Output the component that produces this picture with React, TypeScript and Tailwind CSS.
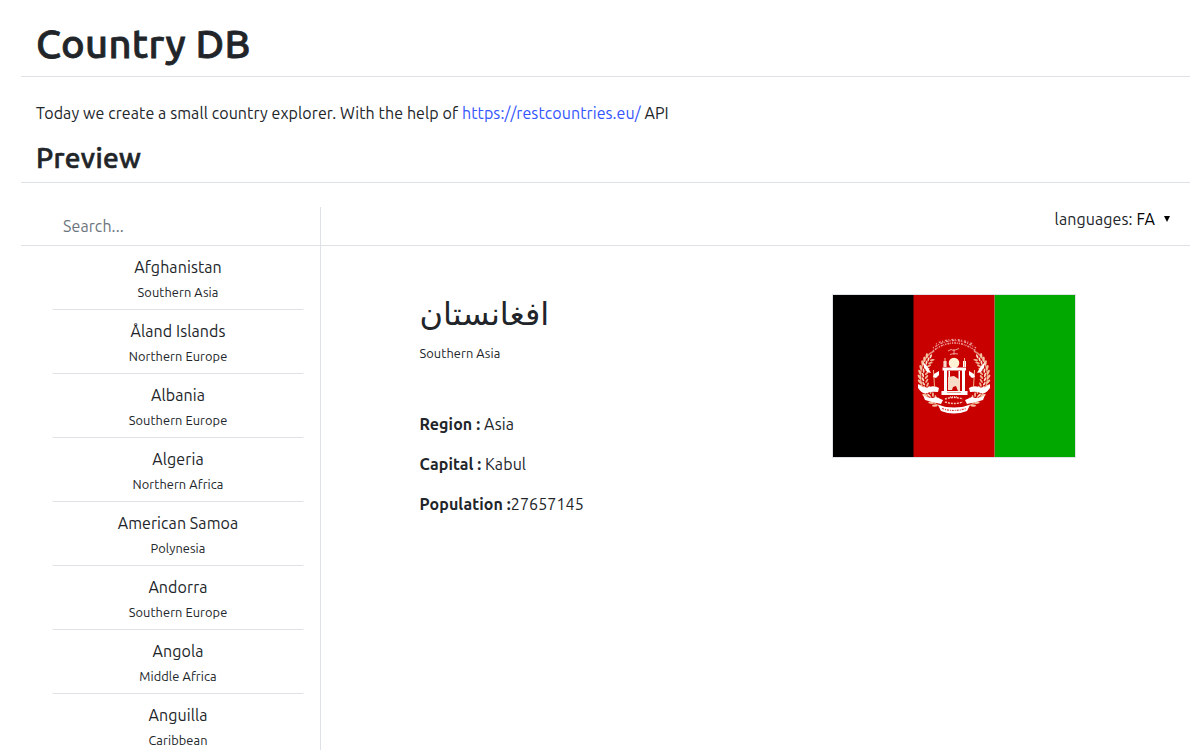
const countries: [string, string][] = [
  ['Afghanistan', 'Southern Asia'],
  ['Åland Islands', 'Northern Europe'],
  ['Albania', 'Southern Europe'],
  ['Algeria', 'Northern Africa'],
  ['American Samoa', 'Polynesia'],
  ['Andorra', 'Southern Europe'],
  ['Angola', 'Middle Africa'],
  ['Anguilla', 'Caribbean'],
];

function Leaves({ flip = false }: { flip?: boolean }) {
  const angles = [-38, -31, -24, -16, -8, 0, 8, 16, 24, 32, 40, 48, 56];
  return (
    <g transform={flip ? 'matrix(-1 0 0 1 242 0)' : undefined}>
      <path d="M101 56C88 62 84 82 91 96C95 105 102 110 110 112" fill="none" stroke="#e58f78" strokeWidth="1.500" />
      {angles.map((a) => (
        <g key={a} transform={`rotate(${-a} 121 82)`}>
          <ellipse cx="86.500" cy="82" rx="2.700" ry="1.200" transform="rotate(55 86.500 82)" fill="#f3c4a2" />
          <ellipse cx="90" cy="80" rx="2.200" ry="0.900" transform="rotate(75 90 80)" fill="#fae3cb" />
          <ellipse cx="93.500" cy="82" rx="2.400" ry="1" transform="rotate(-50 93.500 82)" fill="#f0b093" />
        </g>
      ))}
      <path d="M85 89Q90 94 96 92T106 93L105 97Q98 96 94 98T85 93Z" fill="#fff" />
      <path d="M90 67L94 71L98 78L94 77L91 72Z" fill="#fff" />
      <path d="M90 100Q97 105 103 102L110 105L108 109Q99 107 92 105Z" fill="#fff" />
    </g>
  );
}

function Flag() {
  return (
    <svg viewBox="0 0 242 162" className="block h-[162px] w-[242px]" role="img" aria-label="Flag">
      <path d="M0 0H81V162H0Z" fill="#000" />
      <path d="M161.500 0H242V162H161.500Z" fill="#00a800" />
      <path d="M80.500 0H161.500V162H80.500Z" fill="#c80000" />
      <Leaves />
      <Leaves flip />
      <g fill="none" stroke="#ee9a98" strokeWidth="1">
        <path d="M100 56Q121 40 143 56" strokeWidth="1.600" strokeDasharray="1.200 1.100 2 .8 .8 1" />
        <path d="M100 53Q121 38 143 53" strokeWidth="1.300" strokeDasharray="1 1.500 2.500 1" />
        <path d="M103 49Q121 40 140 49" strokeWidth="1.300" strokeDasharray="1 2 2 1.500" />
        <path d="M115 56l3-1.500 3 1 5-2M117 59.500l4-1 4 .5M121 54v6" />
      </g>
      <g fill="#fff">
        <circle cx="121" cy="68" r="5.300" fill="#fff3d6" />
        <path d="M109.500 72.500h23.500v3h-23.500zM111 75h3v22h-3zM115.500 76h1.500v19h-1.500zM125.500 76h1.500v19h-1.500zM129 75h3v22h-3zM108.500 96h26v4h-26z" />
        <path d="M110.500 66h3v6h-3zM130 66h3v6h-3z" />
        <path d="M115 82l6-1 6 4v11h-2l-2-5-3 1-1 3h-4z" fill="#f8dcc8" />
      </g>
      <path d="M112 63v9M131.500 63v9M100.500 75l1 17M141.500 75l-1 17" stroke="#f2b792" strokeWidth="1" />
      <path d="M101 79l5-3v4l-3 3-3-1zM141 79l-5-3v4l3 3 3-1z" fill="#fff" />
      <path d="M114 97.500h14" stroke="#d57a67" strokeWidth="0.700" />
      <path d="M112 104q9-3 18 0M112 107q9 3 18 0" fill="none" stroke="#f5bdb0" strokeWidth="1.500" strokeDasharray="2 1" />
      <path d="M117 102h8" stroke="#fff" strokeWidth="1.200" strokeDasharray="1 1" />
      <path d="M105 110Q121 115 137 110L134 116Q121 121 108 116Z" fill="#fff" />
      <path d="M109 113.500q12 4 24 0" fill="none" stroke="#d44" strokeWidth="1.200" strokeDasharray="2 1 1 1" />
    </svg>
  );
}

export default function App() {
  return (
    <div className="h-[750px] overflow-hidden bg-white pr-[10px] pl-[21px] font-['Ubuntu','Noto_Sans','DejaVu_Sans',sans-serif] text-[16px] tracking-[0.09px] text-[#212529]">
      <header className="flex h-[77px] items-center border-b border-[#dee2e6] pt-3 pl-[15px]">
        <h1 className="text-[40px] leading-[48px] font-medium tracking-[0.3px] [-webkit-text-stroke:0.8px_#212529]">Country DB</h1>
      </header>
      <p className="mt-6 h-6 pl-[15px] leading-6 whitespace-nowrap">
        Today we create a small country explorer. With the help of{' '}
        <a className="text-[#3455ff]">https://restcountries.eu/</a> API
      </p>
      <div className="mt-4 h-[42px] border-b border-[#dee2e6] pl-[15px]">
        <h2 className="text-[28px] leading-[34px] font-medium tracking-[0.35px] [-webkit-text-stroke:0.6px_#212529]">Preview</h2>
      </div>
      <main className="mt-6 flex h-[543px]">
        <aside className="w-[300px] shrink-0 border-r border-[#dee2e6]">
          <div className="flex h-[39px] items-center border-b border-[#dee2e6] pl-[42px]">
            <input
              placeholder="Search..."
              className="w-[220px] bg-transparent leading-6 tracking-[0.09px] outline-none placeholder:text-[#6c757d]"
            />
          </div>
          <ul className="pr-4 pl-[31px]">
            {countries.map(([name, region]) => (
              <li key={name} className="h-16 rounded-xs border-b border-[#dee2e6] pt-[9px] text-center">
                <div className="leading-6">{name}</div>
                <div className="text-[12.8px] leading-[26px]">{region}</div>
              </li>
            ))}
          </ul>
        </aside>
        <section className="min-w-0 flex-1">
          <div className="flex h-[39px] justify-end border-b border-[#dee2e6] pr-[19px] leading-6">
            <span>languages:</span>
            <span className="ml-1 text-black">FA</span>
            <svg viewBox="0 0 8 8" className="mt-2 ml-2 h-2 w-2">
              <path d="M1 1H7L4 7Z" fill="#000" />
            </svg>
          </div>
          <div className="flex pt-12 pl-[98.5px]">
            <div className="w-[412.5px] shrink-0">
              <h3 className="h-[47px] w-max text-[32px] leading-[38px] tracking-normal" lang="fa">افغانستان</h3>
              <div className="text-[12.8px] leading-6">Southern Asia</div>
              <p className="mt-[47px] leading-6"><b>Region :</b> Asia</p>
              <p className="mt-4 leading-6"><b>Capital :</b> Kabul</p>
              <p className="mt-4 leading-6"><b>Population :</b>27657145</p>
            </div>
            <div className="h-[164px] border border-[#dee2e6]">
              <Flag />
            </div>
          </div>
        </section>
      </main>
    </div>
  );
}
